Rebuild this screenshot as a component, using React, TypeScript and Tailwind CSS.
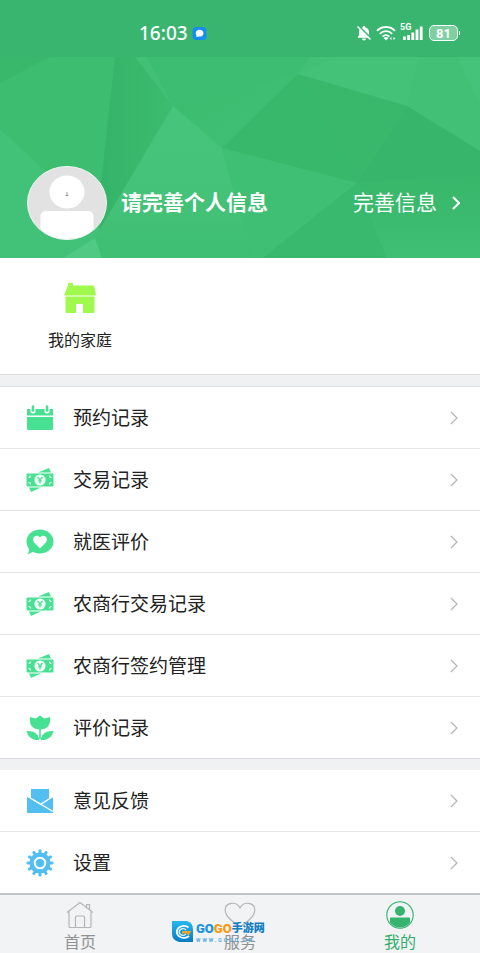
import type { ReactNode } from "react";

const GREEN = "#48e193";
const BLUE = "#52bff0";

function PolyBackdrop() {
  return (
    <svg className="absolute inset-0 h-full w-full" viewBox="0 0 480 201" preserveAspectRatio="none" aria-hidden="true">
      <defs>
        <linearGradient id="fade" x1="0" y1="0" x2="1" y2="1">
          <stop offset="0" stopColor="#3abb6c" />
          <stop offset="1" stopColor="#42c177" />
        </linearGradient>
        <linearGradient id="fold" x1="0" y1="0" x2="1" y2="0">
          <stop offset="0" stopColor="#35b368" />
          <stop offset="1" stopColor="#3cbc6f" />
        </linearGradient>
        <linearGradient id="glow" x1="0" y1="0" x2="0" y2="1">
          <stop offset="0" stopColor="#46c47b" />
          <stop offset="0.500" stopColor="#45c37a" />
          <stop offset="1" stopColor="#3ebe72" />
        </linearGradient>
        <linearGradient id="shade" x1="0" y1="0" x2="0" y2="1">
          <stop offset="0" stopColor="#38b76b" />
          <stop offset="1" stopColor="#3fbf73" />
        </linearGradient>
      </defs>
      <rect width="480" height="201" fill="#3dbd70" />
      <polygon points="0,0 50,0 0,26" fill="#39b86c" />
      <polygon points="0,72 43,112 100,172 95,181 63,201 0,201" fill="#42c278" />
      <polygon points="115,0 135,0 173,49 100,172 101,126" fill="url(#fold)" />
      <polygon points="135,0 147,0 173,49" fill="#42c176" />
      <polygon points="147,0 310,0 298,17 173,49" fill="#3dbd71" />
      <polygon points="173,49 298,17 222,91" fill="url(#fade)" />
      <polygon points="173,49 222,91 252,201 102,201 95,181" fill="url(#glow)" />
      <polygon points="298,17 307,26 357,126 222,91" fill="#38b86b" />
      <polygon points="298,17 407,49 370,106 357,126 307,26" fill="#39b86c" />
      <polygon points="407,49 480,94 480,119 357,126 370,106" fill="#37b56a" />
      <polygon points="310,0 480,0 480,94 407,49 298,17" fill="#41c076" />
      <polygon points="457,0 480,0 480,46" fill="#45c37a" />
      <polygon points="337,0 420,0 407,49 298,17" fill="#45c37a" opacity="0.5" />
      <polygon points="222,91 357,126 263,201 252,201" fill="#3fbf73" />
      <polygon points="357,126 387,201 263,201" fill="#39b96d" />
      <polygon points="357,126 480,119 480,201 387,201" fill="url(#shade)" />
      <polygon points="95,181 102,201 63,201" fill="#50c985" />
    </svg>
  );
}

function StatusIcons() {
  return (
    <div className="flex items-center gap-1">
      <svg className="h-4 w-4" viewBox="0 0 16 16" aria-label="静音">
        <path d="M8 .8a1.200 1.200 0 0 0-1.200 1.200v.3C4.500 2.900 3 4.800 3 7v3.200L1.500 12.800h13L13 10.200V7c0-2.200-1.500-4.100-3.800-4.700V2A1.200 1.200 0 0 0 8 .8zM6 13.600a2 2 0 0 0 4 0z" fill="#fff" />
        <path d="M2.500 1 15.500 14" stroke="#39b570" strokeWidth="2" />
        <path d="M1.500 1.500 14.500 14.500" stroke="#fff" strokeWidth="1.500" />
      </svg>
      <svg className="h-4 w-5" viewBox="0 0 20 16" fill="none" stroke="#fff" strokeWidth="1.900" aria-label="无线网络">
        <path d="M1 5.800c5-5 13-5 18 0M3.800 8.800c3.600-3.600 8.800-3.600 12.400 0M6.600 11.600c2-2 4.800-2 6.800 0" />
        <path d="m10 15.500-2.500-2.500q2.500-2 5 0z" fill="#fff" stroke="none" />
        <path d="m13.500 13.500 2-1.500v3zM19.500 13.500l-2-1.500v3z" fill="#fff" stroke="none" />
      </svg>
      <div className="relative h-4 w-6">
        <span className="absolute -top-1 left-0 text-[9px] leading-3 font-bold">5G</span>
        <svg className="h-4 w-6" viewBox="0 0 24 16" fill="#fff" aria-label="信号">
          <path d="M3 11.500h2.800v3.500H3zM7.200 10h2.800v5H7.200zM11.400 7.500h2.800V15h-2.800zM15.600 4.500h2.800V15h-2.800zM19.800 1.500h2.800V15h-2.800z" />
        </svg>
      </div>
      <div className="flex items-center gap-px">
        <div className="ml-px flex h-4 w-[29px] items-center justify-center rounded-[5px] border border-white bg-white/35 text-[13px] leading-none font-bold">81</div>
        <div className="h-1 w-px bg-white" />
      </div>
    </div>
  );
}

function Chevron({ className, width }: { className: string; width: number }) {
  return (
    <svg className={className} viewBox="0 0 8 14" fill="none" stroke="currentColor" strokeWidth={width} aria-hidden="true">
      <path d="m1 1 6 6-6 6" />
    </svg>
  );
}

function Avatar() {
  return (
    <svg className="h-[74px] w-20 shrink-0" viewBox="0 0 80 74" role="img" aria-label="头像">
      <defs>
        <clipPath id="face"><ellipse cx="40" cy="37" rx="39" ry="36" /></clipPath>
      </defs>
      <ellipse cx="40" cy="37" rx="39.500" ry="36.500" fill="#e2e2e2" stroke="#f3f6f4" />
      <g clipPath="url(#face)" fill="#fff">
        <ellipse cx="40" cy="26" rx="17.500" ry="16.500" />
        <rect x="13.500" y="45" width="53" height="34" rx="5" />
      </g>
      <path d="M40 26v4M38.500 29.500h3" stroke="#999" />
    </svg>
  );
}

function CalendarIcon() {
  return (
    <svg className="h-7 w-7" viewBox="0 0 28 28" aria-hidden="true">
      <path d="M1 5h26v6.500H1zM1 13h26v12q0 1-1 1H2q-1 0-1-1z" fill={GREEN} />
      <path d="M7 3v4M21 3v4" stroke="#fff" strokeWidth="5" strokeLinecap="round" />
      <path d="M7 2.500v4M21 2.500v4" stroke={GREEN} strokeWidth="2.600" strokeLinecap="round" />
    </svg>
  );
}

function MoneyIcon() {
  return (
    <svg className="h-7 w-7" viewBox="0 0 28 28" aria-hidden="true">
      <path d="m12 6.500 11-4.500 2 4.500zM3 21.500h12L5 26z" fill={GREEN} />
      <rect x="0.500" y="7.500" width="27" height="13" rx="1" fill={GREEN} />
      <path d="M2.500 11.500q2 0 2-2M25.500 11.500q-2 0-2-2M2.500 16.500q2 0 2 2M25.500 16.500q-2 0-2 2" fill="none" stroke="#e8fff3" strokeWidth="1.200" />
      <circle cx="14" cy="14" r="5.600" fill="#f4fff9" />
      <path d="m11.500 11 2.500 3 2.500-3M14 14v3.500M12.200 14.800h3.600" fill="none" stroke={GREEN} strokeWidth="1.200" />
    </svg>
  );
}

function HeartBubbleIcon() {
  return (
    <svg className="h-7 w-7" viewBox="0 0 28 28" aria-hidden="true">
      <path d="M14 1.500c7.500 0 13.500 5.300 13.500 12S21.500 25.500 14 25.500c-2.700 0-5.200-.7-7.300-1.800L2 26.500l1.200-5.300C1.500 19 .5 16.400.5 13.500.5 6.800 6.500 1.500 14 1.500z" fill={GREEN} />
      <path d="M14 20.500 8.200 14.400c-3.700-4.400 2.400-9.200 5.800-5 3.400-4.200 9.500.6 5.800 5z" fill="#fff" />
    </svg>
  );
}

function TulipIcon() {
  return (
    <svg className="h-7 w-7" viewBox="0 0 28 28" fill={GREEN} aria-hidden="true">
      <path d="M14 1.500 18.500 4.500l5.500-1.500c1 6.500-1.500 12.500-10 12.500S3 9.500 4 3l5.500 1.500z" />
      <path d="M13.200 15h1.600v10h-1.600z" />
      <path d="M.5 17c7-.5 12 2.500 12.800 9C7 26.500 2 23.500.5 17zM27.500 17c-7-.5-12 2.500-12.800 9 6.300.5 11.300-2.500 12.800-9z" />
    </svg>
  );
}

function MailIcon() {
  return (
    <svg className="h-7 w-7" viewBox="0 0 28 28" aria-hidden="true">
      <path d="M5 2h18v10.500L15 17 5 11z" fill={BLUE} />
      <path d="M1 9.500 14.500 18 27 9.500V26H1z" fill={BLUE} />
      <path d="m1 9 26 15.500M27 9.500 14.500 17.300" stroke="#fff" strokeWidth="1.400" />
    </svg>
  );
}

const TEETH = Array.from({ length: 12 }, (_, i) => i * 30);

function GearIcon() {
  return (
    <svg className="h-7 w-7" viewBox="0 0 28 28" aria-hidden="true">
      {TEETH.map((a) => (
        <rect key={a} x="12.500" y="0.500" width="3" height="5" rx="1" fill={BLUE} transform={`rotate(${a} 14 14)`} />
      ))}
      <circle cx="14" cy="14" r="10.500" fill={BLUE} />
      <circle cx="14" cy="14" r="5.300" fill="none" stroke="#fff" strokeWidth="2" />
    </svg>
  );
}

function Row({ icon, label }: { icon: ReactNode; label: string }) {
  return (
    <li>
      <button type="button" className="flex h-[61px] w-full items-center pr-[22px] pl-[26px] text-left">
        {icon}
        <span className="ml-[19px] flex-1 pt-[2px] text-[19px] leading-7">{label}</span>
        <Chevron className="h-[14px] w-2 text-[#b5b5b5]" width={1.2} />
      </button>
    </li>
  );
}

function Tab({ icon, label, active }: { icon: ReactNode; label: string; active?: boolean }) {
  return (
    <a href="#" className={`flex flex-1 flex-col items-center pt-[6px] ${active ? "text-[#35ae6c]" : "text-[#929292]"}`}>
      {icon}
      <span className="mt-1 text-[16px] leading-5">{label}</span>
    </a>
  );
}

function Watermark() {
  return (
    <div className="absolute top-[26px] left-1/2 z-10 -ml-[68px] flex items-center gap-[2px] whitespace-nowrap">
      <svg className="h-[22px] w-[22px]" viewBox="0 0 22 22" aria-hidden="true">
        <defs>
          <linearGradient id="badge" x1="0" y1="0" x2="0" y2="1">
            <stop offset="0" stopColor="#25b9ee" />
            <stop offset="1" stopColor="#087ac5" />
          </linearGradient>
        </defs>
        <path d="M0 0h15q6 2 6 8v13H7Q0 19 0 13z" fill="url(#badge)" />
        <path d="M16.500 6.500a7 6 0 1 0 .5 8.500" fill="none" stroke="#fff" strokeWidth="1.800" />
        <path d="M14 9a3.800 3.300 0 1 0 0 4" fill="none" stroke="#d7f3fb" strokeWidth="1.500" />
        <path d="M10 10h9l-2.500 5-1.500-2.500h-5z" fill="#f7a51d" />
      </svg>
      <div className="flex flex-col">
        <div className="flex h-4 items-center leading-4 font-black">
          <span className="text-[13px] text-[#1c93dc]">GO</span>
          <span className="text-[13px] text-[#f79a16]">GO</span>
          <span className="text-[11px] text-[#137fc4]">手游网</span>
        </div>
        <span className="text-[5px] leading-[6px] font-bold tracking-[2px] text-[#4faadb]">WWW.GOGO.CN</span>
      </div>
    </div>
  );
}

export default function App() {
  return (
    <div className="min-h-screen w-full overflow-hidden bg-white font-['Roboto','Noto_Sans_CJK_SC',sans-serif] text-[#222]">
      <div className="flex h-[57px] items-center justify-between bg-[#39b570] pt-[9px] pr-[20px] pl-[139px] text-white">
        <div className="flex items-center gap-1">
          <time className="font-['Noto_Sans',sans-serif] text-[19px] leading-6 font-medium">16:03</time>
          <svg className="h-[13px] w-[15px]" viewBox="0 0 15 14" aria-hidden="true">
            <rect width="15" height="14" rx="4" fill="#168bf0" />
            <path d="M7.500 3c2.600 0 4.300 1.500 4.300 3.600S10 10.300 7.500 10.300c-.7 0-3 .7-3.300.4-.3-.3.300-1.500-.2-2.300C2.400 5.500 4.500 3 7.500 3z" fill="#fff" />
          </svg>
        </div>
        <StatusIcons />
      </div>

      <header className="relative flex h-[201px] flex-col justify-end pb-[18px] text-white">
        <PolyBackdrop />
        <div className="relative flex items-center pr-[20px] pl-[27px]">
          <Avatar />
          <h1 className="ml-[14px] flex-1 text-[21px] leading-8 font-bold">请完善个人信息</h1>
          <a href="#" className="flex items-center gap-[15px] text-[21px] leading-8">
            完善信息
            <Chevron className="h-[14px] w-2" width={2} />
          </a>
        </div>
      </header>

      <section className="flex h-[116px] items-start pt-[22px]">
        <button type="button" className="flex w-1/3 flex-col items-center gap-[13px]">
          <svg className="h-9 w-9" viewBox="0 0 36 36" fill="#a0fa4e" aria-hidden="true">
            <path d="M6 5.500V4q0-1 1-1h3q1 0 1 1v1.500h20q1 0 1.300 1L34 15.500H2z" />
            <path d="M3.500 16.500h29V32q0 1-1 1H21v-9h-7v9H4.500q-1 0-1-1z" />
          </svg>
          <span className="text-[16px] leading-6">我的家庭</span>
        </button>
      </section>

      <div className="h-[13px] border-y border-[#dedfe1] bg-[#f0f1f3]" />
      <ul className="divide-y divide-[#e3e4e6]">
        <Row icon={<CalendarIcon />} label="预约记录" />
        <Row icon={<MoneyIcon />} label="交易记录" />
        <Row icon={<HeartBubbleIcon />} label="就医评价" />
        <Row icon={<MoneyIcon />} label="农商行交易记录" />
        <Row icon={<MoneyIcon />} label="农商行签约管理" />
        <Row icon={<TulipIcon />} label="评价记录" />
      </ul>
      <div className="h-3 border-t border-[#d8d9dc] bg-[#f0f1f3]" />
      <ul className="divide-y divide-[#e3e4e6]">
        <Row icon={<MailIcon />} label="意见反馈" />
        <Row icon={<GearIcon />} label="设置" />
      </ul>

      <nav className="relative flex h-[60px] border-t-2 border-[#c3c5c7] bg-[#f1f3f5]">
        <Tab
          label="首页"
          icon={
            <svg className="h-7 w-7 shrink-0" viewBox="0 0 28 28" fill="none" stroke="#b5b5b5" strokeWidth="1.200" aria-hidden="true">
              <path d="M1 11.500 14 1.500l13 10M3 10v15.500q0 1 1 1h20q1 0 1-1V10M20.500 6.300V3.500h3v5M9.500 26.500V16q0-1 1-1h7q1 0 1 1v10.500" />
            </svg>
          }
        />
        <Tab
          label="服务"
          icon={
            <svg className="h-7 w-8 shrink-0" viewBox="0 0 32 28" fill="none" stroke="#b5b5b5" strokeWidth="1.200" aria-hidden="true">
              <path d="M16 26C9 21 1.200 15.500 1.200 9 1.200 1.500 12 -.5 16 7 20-.5 30.800 1.500 30.800 9 30.800 15.500 23 21 16 26z" />
            </svg>
          }
        />
        <Tab
          active
          label="我的"
          icon={
            <svg className="h-7 w-7 shrink-0" viewBox="0 0 28 28" aria-hidden="true">
              <defs>
                <clipPath id="me"><circle cx="14" cy="14" r="12.500" /></clipPath>
              </defs>
              <circle cx="14" cy="14" r="13.200" fill="none" stroke="#2fb06c" strokeWidth="1.100" />
              <circle cx="14" cy="10" r="5" fill="#35b36f" />
              <rect x="4" y="16.500" width="20" height="11" rx="1" fill="#35b36f" clipPath="url(#me)" />
            </svg>
          }
        />
        <Watermark />
      </nav>
    </div>
  );
}
